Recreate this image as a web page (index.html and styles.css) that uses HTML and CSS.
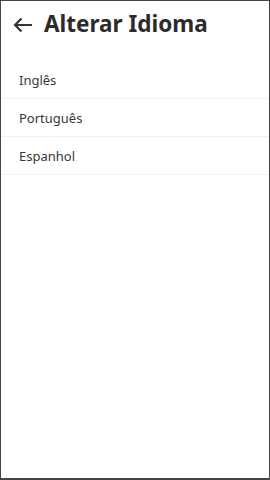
FILE: index.html
```html
<!DOCTYPE html>
<html lang="pt">
<head>
    <meta charset="UTF-8">
    <meta name="viewport" content="width=device-width, initial-scale=1.0">
    <title>Alterar Idioma</title>
    <link rel="stylesheet" href="styles.css">
</head>
<body>
    <div class="screen">
        <div class="header">
            <button class="back-btn" aria-label="Voltar">
                <svg class="back-icon" viewBox="0 0 20 16">
                    <path d="M19 8H2M8.5 1.5L2 8l6.5 6.5"/>
                </svg>
            </button>
            <h1 class="title">Alterar Idioma</h1>
        </div>
        <ul class="language-list">
            <li class="language-item">Inglês</li>
            <li class="language-item">Português</li>
            <li class="language-item">Espanhol</li>
        </ul>
    </div>
</body>
</html>
```

FILE: styles.css
```css
* {
    margin: 0;
    padding: 0;
    box-sizing: border-box;
}

body {
    font-family: "Noto Sans", "Open Sans", sans-serif;
    background: #ffffff;
    width: 270px;
    height: 480px;
}

.screen {
    width: 270px;
    height: 480px;
    background: #ffffff;
    border: 1px solid #444444;
    border-bottom-width: 2px;
    display: flex;
    flex-direction: column;
}

.header {
    height: 60px;
    display: flex;
    align-items: center;
    gap: 11px;
    padding: 0 0 13px 12px;
}

.back-btn {
    width: 20px;
    height: 16px;
    border: none;
    background: none;
    display: flex;
    padding: 0;
}

.back-icon {
    width: 20px;
    height: 16px;
    fill: none;
    stroke: #333333;
    stroke-width: 2.2;
}

.title {
    font-size: 22.5px;
    font-weight: 700;
    color: #2b2b2b;
    line-height: 1;
}

.language-list {
    list-style: none;
}

.language-item {
    height: 38px;
    display: flex;
    align-items: center;
    padding-left: 18px;
    font-size: 13px;
    color: #383838;
    border-bottom: 1px solid #f0f0f0;
}
```
